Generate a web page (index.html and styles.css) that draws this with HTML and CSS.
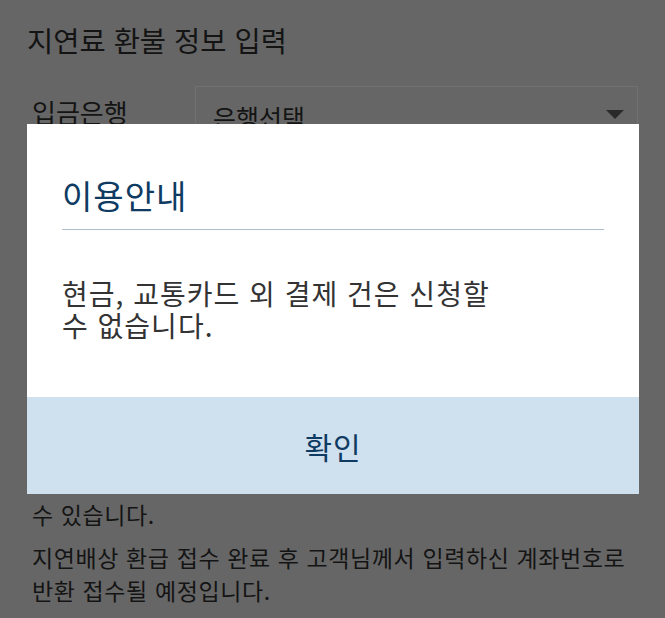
FILE: index.html
```html
<!DOCTYPE html>
<html lang="ko">
<head>
<meta charset="UTF-8">
<meta name="viewport" content="width=device-width, initial-scale=1.0">
<title>지연료 환불 정보 입력</title>
<link rel="stylesheet" href="styles.css">
</head>
<body>

    <div class="page">
        <h1 class="page-title">지연료 환불 정보 입력</h1>

        <div class="form-row">
            <label class="form-label">입금은행</label>
            <div class="select-box">
                <span>은행선택</span>
                <span class="arrow"></span>
            </div>
        </div>

        <!-- holder / account inputs (under the popup) -->
        <div class="form-row">
            <div class="form-label"></div>
            <div class="input-box"></div>
        </div>
        <div class="form-row">
            <div class="form-label"></div>
            <div class="input-box"></div>
        </div>

        <div class="notice">
            <p>지연배상 환급금 접수(지연 열차 1년 이내)가 가능할<br>수 있습니다.</p>
            <p>지연배상 환급 접수 완료 후 고객님께서 입력하신 계좌번호로<br>반환 접수될 예정입니다.</p>
        </div>
    </div>

    <!-- popup over the page -->
    <div class="modal">
        <div class="modal-body">
            <h2 class="modal-title">이용안내</h2>
            <p class="modal-text">현금, 교통카드 외 결제 건은 신청할<br>수 없습니다.</p>
        </div>
        <button class="modal-button">확인</button>
    </div>

</body>
</html>
```

FILE: styles.css
```css
body {
    margin: 0;
    background-color: #666666;
    font-family: "Noto Sans CJK KR", "Noto Sans", sans-serif;
    color: #141414;
}

.page {
    padding: 20px 0 0 0;
}

.page-title {
    margin: 0 0 0 27px;
    font-size: 28.5px;
    font-weight: normal;
    line-height: 40px;
}

.form-row {
    display: flex;
    align-items: flex-start;
    margin-top: 26px;
    height: 64px;
}

.form-label {
    width: 163px;
    padding: 6px 0 0 32px;
    font-size: 26px;
    line-height: 40px;
}

.select-box {
    flex: 1;
    height: 64px;
    margin-right: 27px;
    box-sizing: border-box;
    border: 1px solid #717171;
    display: flex;
    align-items: flex-start;
    justify-content: space-between;
    padding: 10px 13px 0 17px;
    font-size: 25px;
    line-height: 40px;
}

.arrow {
    margin-top: 13px;
    width: 0;
    height: 0;
    border-left: 9px solid transparent;
    border-right: 9px solid transparent;
    border-top: 9px solid #2a2a2a;
}

.input-box {
    flex: 1;
    height: 64px;
    margin-right: 27px;
    box-sizing: border-box;
    border: 1px solid #717171;
}

.notice {
    margin-top: 135px;
    padding-left: 32px;
    font-size: 23px;
    letter-spacing: 0.6px;
    line-height: 33px;
}

.notice p {
    margin: 0 0 10px 0;
}

.modal {
    position: absolute;
    top: 124px;
    left: 27px;
    width: 612px;
    background-color: #ffffff;
}

.modal-body {
    padding: 51px 35px 0 35px;
    height: 222px;
}

.modal-title {
    margin: 0;
    padding-bottom: 14px;
    border-bottom: 1px solid #aebccb;
    font-size: 33px;
    letter-spacing: 1px;
    font-weight: normal;
    line-height: 40px;
    color: #0f3b63;
}

.modal-text {
    margin: 47px 0 0 0;
    font-size: 28px;
    letter-spacing: 1px;
    line-height: 32px;
    color: #333333;
}

.modal-button {
    display: block;
    width: 100%;
    height: 97px;
    border: none;
    background-color: #cfe0ee;
    font-family: inherit;
    font-size: 30px;
    letter-spacing: 1px;
    color: #0f3b63;
    cursor: pointer;
}
```
